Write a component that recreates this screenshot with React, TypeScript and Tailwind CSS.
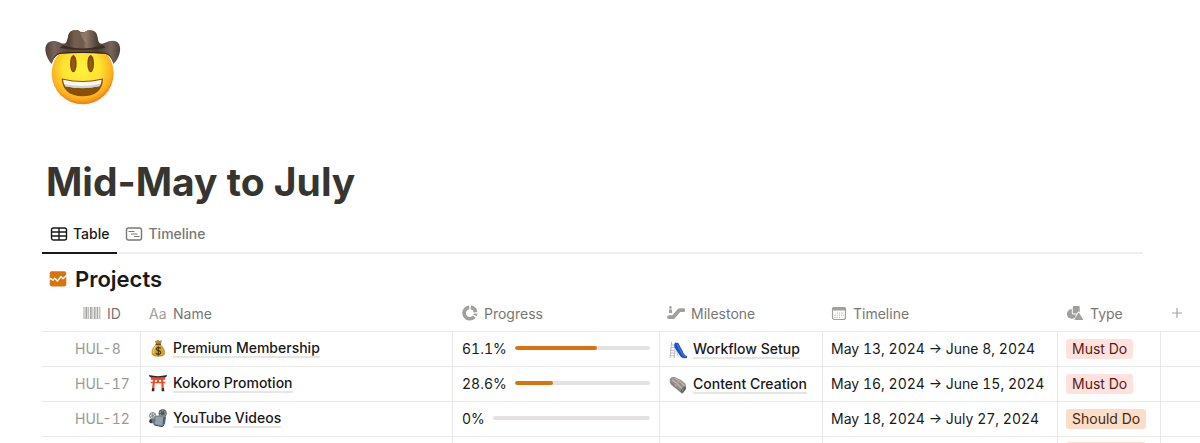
import type { ReactNode } from "react";

function CowboyFace() {
  return (
    <svg className="size-[76px]" viewBox="46 29 228 228" role="img" aria-label="Cowboy">
      <defs>
        <radialGradient id="face" cx="0.48" cy="0.42" r="0.62">
          <stop offset="0" stopColor="#fff23e" />
          <stop offset="0.5" stopColor="#ffe12e" />
          <stop offset="0.8" stopColor="#fcae1e" />
          <stop offset="1" stopColor="#e8620c" />
        </radialGradient>
        <linearGradient id="crown" x1="0" x2="1" y1="0" y2="0">
          <stop offset="0" stopColor="#493a32" />
          <stop offset="0.25" stopColor="#75604f" />
          <stop offset="0.5" stopColor="#6d5a4c" />
          <stop offset="0.6" stopColor="#8d7868" />
          <stop offset="1" stopColor="#44362e" />
        </linearGradient>
        <linearGradient id="brim" x1="0" x2="1" y1="0" y2="0">
          <stop offset="0" stopColor="#4f4038" />
          <stop offset="0.12" stopColor="#75655b" />
          <stop offset="0.3" stopColor="#54443b" />
          <stop offset="0.5" stopColor="#67564a" />
          <stop offset="0.7" stopColor="#4c3d34" />
          <stop offset="0.88" stopColor="#75655b" />
          <stop offset="1" stopColor="#4f4038" />
        </linearGradient>
      </defs>
      <circle cx="159" cy="162" r="93" fill="url(#face)" />
      <ellipse cx="131" cy="133" rx="10" ry="26" fill="#7f4506" />
      <ellipse cx="183" cy="133" rx="10" ry="26" fill="#7f4506" />
      <ellipse cx="131" cy="136" rx="6" ry="20" fill="#955a07" />
      <ellipse cx="183" cy="136" rx="6" ry="20" fill="#955a07" />
      <path d="M96 180Q95 176 100 178Q158 192 215 178Q221 176 220 181Q216 230 158 231Q101 230 96 180Z" fill="#8c4f08" />
      <path d="M100 181Q158 195 216 181Q215 192 210 200Q157 212 107 201Q101 191 100 181Z" fill="#f8f9f8" />
      <path d="M104 194Q158 206 213 193L210 201Q157 213 107 201Z" fill="#cad4d5" />
      <path d="M66 134C50 117 41 88 52 73C61 62 78 63 92 70C107 77 112 70 115 52C118 37 125 33 137 32C147 31 150 40 159 39C169 40 170 31 181 33C195 34 201 39 204 55C206 71 211 77 226 70C241 63 260 60 268 74C277 93 267 120 251 134C247 116 240 107 226 103Q159 98 92 103C78 107 71 116 66 134Z" fill="url(#brim)" />
      <path d="M111 73C116 61 113 44 123 37C134 30 145 31 150 36Q160 44 169 35C180 29 195 34 200 43C205 56 202 69 209 77C186 93 137 94 111 73Z" fill="url(#crown)" />
      <path d="M151 38Q158 47 169 36Q163 56 175 73Q156 62 151 38Z" fill="#a18b79" opacity=".6" />
      <path d="M100 78Q159 98 218 77L228 86Q159 99 90 86Z" fill="#3b2d26" />
      <path d="M66 134C70 111 79 103 92 100Q159 95 226 100C239 103 248 111 251 134C247 116 240 107 226 103Q159 99 92 103C78 107 71 116 66 134Z" fill="#33261f" />
    </svg>
  );
}

function MoneyBag() {
  return (
    <svg className="size-[18px] shrink-0" viewBox="0 0 54 54" aria-hidden="true">
      <path d="M17 4Q21 8 24 4Q28 1 31 5Q35 6 39 3Q38 12 33 17H22Q19 10 17 4Z" fill="#b98b24" />
      <path d="M21 17C12 24 6 38 10 47Q13 52 28 52Q43 52 46 47C50 38 43 23 34 17Z" fill="#d5a332" stroke="#94701f" strokeWidth="1.5" />
      <path d="M21 20Q12 31 13 43" fill="none" stroke="#f3d878" strokeWidth="3" />
      <path d="M20 16H36" stroke="#6c471b" strokeWidth="4" />
      <path d="M35 28Q32 25 28 26Q21 26 22 31Q23 34 29 35Q36 37 35 42Q33 46 28 46Q23 46 20 42M28 22V50" fill="none" stroke="#463910" strokeWidth="3.5" />
    </svg>
  );
}

function Torii() {
  return (
    <svg className="size-[18px] shrink-0" viewBox="0 0 54 54" aria-hidden="true">
      <path d="M5 8Q27 13 49 8L48 17Q27 19 6 17Z" fill="#ec4b2b" />
      <path d="M0 3Q27 10 54 3L52 9Q27 14 2 9Z" fill="#28292b" />
      <path d="M5 23H49V28H5ZM24 15H30V25H24ZM12 16H18L16 46H9ZM36 16H42L45 46H38Z" fill="#ed4a2a" />
      <path d="M9 43H16V52H8ZM38 43H45L46 52H38Z" fill="#292a2c" />
    </svg>
  );
}

function Projector() {
  return (
    <svg className="size-[18px] shrink-0" viewBox="0 0 54 54" aria-hidden="true">
      <circle cx="41" cy="13" r="12" fill="#53585b" />
      <circle cx="41" cy="13" r="8" fill="none" stroke="#9da3a5" strokeWidth="4" strokeDasharray="5 3.5" />
      <circle cx="11" cy="20" r="9.5" fill="#d8dddf" stroke="#727a7e" strokeWidth="2.5" />
      <path d="M11 11V29M3 15L19 25M3 25L19 15" stroke="#6f777b" strokeWidth="2" />
      <path d="M12 27L20 20L47 17L51 23L48 46L39 52L14 48Z" fill="#788992" />
      <path d="M20 25L42 24L40 49L18 45Z" fill="#91a3ac" />
      <path d="M43 25L50 23L47 44L41 49Z" fill="#526068" />
      <path d="M2 31L19 29L18 44L3 42Z" fill="#687780" />
      <ellipse cx="5" cy="37" rx="4" ry="6" fill="#303a40" />
      <path d="M16 48L39 53L45 49" fill="none" stroke="#3f494e" strokeWidth="3" />
    </svg>
  );
}

function Slide() {
  return (
    <svg className="size-[18px] shrink-0" viewBox="0 0 54 54" aria-hidden="true">
      <path d="M8 3L3 51M20 3L16 51M7 12H18M6 20H17M5 28H16M4 36H16M4 44H15" fill="none" stroke="#a9afb2" strokeWidth="2.5" />
      <path d="M22 26L27 46" stroke="#b4babd" strokeWidth="2.5" />
      <path d="M16 9Q18 3 28 6Q35 20 41 30Q45 43 54 45V51Q38 54 32 43Q24 30 16 18Z" fill="#1d4fc0" />
      <path d="M24 9Q29 22 37 33Q42 46 51 48" fill="none" stroke="#3d78e0" strokeWidth="4" />
    </svg>
  );
}

function Newspaper() {
  return (
    <svg className="size-[18px] shrink-0" viewBox="0 0 54 54" aria-hidden="true">
      <path d="M2 10Q6 1 17 3Q35 9 49 23Q54 31 49 42L42 52Q38 54 34 49L6 26Q0 18 2 10Z" fill="#92908d" />
      <path d="M9 11Q27 23 40 38M16 6Q34 15 47 30" fill="none" stroke="#b9b6b1" strokeWidth="4" />
      <path d="M6 20L36 47" stroke="#74716e" strokeWidth="2.5" />
      <path d="M17 29Q20 19 30 12L34 15Q24 22 22 33Z" fill="#c49f84" />
      <ellipse cx="43" cy="41" rx="5" ry="10" transform="rotate(35 43 41)" fill="#5c5a58" />
      <path d="M41 46Q39 41 45 37" fill="none" stroke="#c2c0bc" strokeWidth="2" />
    </svg>
  );
}

function TableIcon() {
  return (
    <svg className="h-4 w-[18px] shrink-0" viewBox="0 0 18 16" fill="none" stroke="currentColor" strokeWidth="1.4" aria-hidden="true">
      <rect x="1.5" y="2" width="15" height="12" rx="2" />
      <path d="M1.5 6H16.5M1.5 10H16.5M9 2V14" />
    </svg>
  );
}

function TimelineIcon() {
  return (
    <svg className="h-4 w-[18px] shrink-0" viewBox="0 0 18 16" fill="none" stroke="currentColor" strokeLinecap="round" aria-hidden="true">
      <rect x="1.5" y="2" width="15" height="12" rx="2" strokeWidth="1.4" />
      <path d="M4 5.5H9M6.5 8H12M9.5 10.5H14" strokeWidth="1.2" />
    </svg>
  );
}

function ChartIcon() {
  return (
    <svg className="size-[18px] shrink-0" viewBox="0 0 18 18" aria-hidden="true">
      <rect x="0.7" y="1.2" width="16.6" height="15.2" rx="2.2" fill="#d9730d" />
      <path d="M0 10.2L1.6 8.4L4 10.2L5.8 8.2L8.4 11L12 6.8L14 8.8L18 5" fill="none" stroke="#fff" strokeWidth="1.4" strokeLinejoin="round" />
    </svg>
  );
}

function BarcodeIcon() {
  return (
    <svg className="h-3 w-[18px] shrink-0" viewBox="0 0 18 12" fill="#a5a5a2" aria-hidden="true">
      <path d="M.5 0h1v12h-1zM2.4 0h2v12h-2zM5.3 0h.8v12h-.8zM7 0h1.7v12H7zM9.5 0h.8v12h-.8zM11.1 0h1.5v12h-1.5zM13.6 0h1.6v12h-1.6zM16.3 0h1v12h-1z" />
    </svg>
  );
}

function DonutIcon() {
  return (
    <svg className="size-4 shrink-0" viewBox="0 0 16 16" fill="none" stroke="#a0a09d" strokeWidth="3.6" aria-hidden="true">
      <path d="M7.2 2.4A5.7 5.7 0 1 0 12.3 11.6" />
      <path d="M8.8 2.4A5.7 5.7 0 0 1 13.6 7.2" />
      <path d="M13.6 8.7A5.7 5.7 0 0 1 13.1 10.6" />
    </svg>
  );
}

function EscalatorIcon() {
  return (
    <svg className="h-4 w-[18px] shrink-0" viewBox="0 0 18 16" fill="#a0a09d" aria-hidden="true">
      <circle cx="3.4" cy="2.4" r="1.3" />
      <path d="M2 5.3Q2 4.3 3 4.3H4Q5 4.3 5 5.3V8H2Z" />
      <path d="M2 12.2H6.2L12.5 5.1H16.3" fill="none" stroke="#a0a09d" strokeWidth="3.8" strokeLinecap="round" strokeLinejoin="round" />
    </svg>
  );
}

function CalendarIcon() {
  return (
    <svg className="h-4 w-4 shrink-0" viewBox="0 0 16 16" aria-hidden="true">
      <rect x="1.5" y="2.5" width="13" height="12" rx="2" fill="none" stroke="#a0a09d" strokeWidth="1.2" />
      <path d="M1 5.5V4Q1 2 3 2H13Q15 2 15 4V5.5Z" fill="#a0a09d" />
      <path d="M6 8H13M3.5 10.2H13M3.5 12.4H10" stroke="#a0a09d" strokeWidth="1" strokeDasharray="1 1.2" />
    </svg>
  );
}

function ShapesIcon() {
  return (
    <svg className="h-4 w-[18px] shrink-0" viewBox="0 0 18 16" fill="#a0a09d" aria-hidden="true">
      <path d="M5.8 4.1A4.8 4.8 0 1 0 9 12.4L10.2 9.6H7.2Q5.8 9.6 5.8 8Z" />
      <path d="M7.7 1H12.7Q13.7 1 13.7 2V7.5L12.8 6.6Q12.3 6.2 11.8 7L11 8.4H7.8Q6.8 8.4 6.8 7.4V2Q6.8 1 7.7 1Z" />
      <path d="M12.2 8Q12.7 7.3 13.2 8L17 14.2Q17.3 15 16.5 15H9Q8.2 15 8.6 14.2Z" />
    </svg>
  );
}

type Page = { title: string; icon: ReactNode };
type Project = {
  id: string;
  page: Page;
  progress: number;
  milestone?: Page;
  timeline: string;
  type: "Must Do" | "Should Do";
};

const projects: Project[] = [
  {
    id: "HUL-8",
    page: { title: "Premium Membership", icon: <MoneyBag /> },
    progress: 61.1,
    milestone: { title: "Workflow Setup", icon: <Slide /> },
    timeline: "May 13, 2024 → June 8, 2024",
    type: "Must Do",
  },
  {
    id: "HUL-17",
    page: { title: "Kokoro Promotion", icon: <Torii /> },
    progress: 28.6,
    milestone: { title: "Content Creation", icon: <Newspaper /> },
    timeline: "May 16, 2024 → June 15, 2024",
    type: "Must Do",
  },
  {
    id: "HUL-12",
    page: { title: "YouTube Videos", icon: <Projector /> },
    progress: 0,
    timeline: "May 18, 2024 → July 27, 2024",
    type: "Should Do",
  },
];

const tagColors = {
  "Must Do": "bg-[#ffe2dd] text-[#5d1715]",
  "Should Do": "bg-[#fadec9] text-[#49290e]",
};

function PageLink({ page, align = "items-center" }: { page: Page; align?: string }) {
  return (
    <a href="#" className={`flex gap-[6px] font-medium whitespace-nowrap ${align}`}>
      {page.icon}
      <span className="border-b-2 border-[#e6e6e4] leading-[17px]">{page.title}</span>
    </a>
  );
}

function ProgressBar({ value }: { value: number }) {
  return (
    <div className="flex items-center gap-2">
      <span>{value}%</span>
      <div className="h-1 flex-1 overflow-hidden rounded-full bg-[#e3e2e0]" role="progressbar" aria-label="Progress" aria-valuenow={value}>
        <div className="h-full rounded-full bg-[#d9730d]" style={{ width: `${value}%` }} />
      </div>
    </div>
  );
}

function Head({ icon, label, className = "px-2" }: { icon: ReactNode; label: string; className?: string }) {
  return (
    <th scope="col" className={`h-[37px] border-b border-[#e9e9e7] font-normal ${className}`}>
      <span className="flex items-center gap-[6px]">
        {icon}
        {label}
      </span>
    </th>
  );
}

const line = "h-[35px] border-r border-b border-[#e9e9e7]";
const cell = `${line} px-2 pb-[2px]`;

export default function App() {
  return (
    <main className="h-screen overflow-hidden bg-white pt-[29px] pl-[42px] font-[Inter,sans-serif] text-[14px] text-[#191918]">
      <div className="pl-[3px]">
        <CowboyFace />
      </div>
      <h1 className="mt-[53px] pl-1 text-[39px] leading-[48px] font-bold text-[#37352f]">Mid-May to July</h1>

      <nav className="mt-[10px] mr-[57px] flex border-b-2 border-[#efefee] font-medium" aria-label="Views">
        <a href="#" aria-current="page" className="-mb-[2px] flex h-[38px] items-center gap-[5px] border-b-2 border-[#191918] px-2 pb-px">
          <TableIcon />
          Table
        </a>
        <a href="#" className="flex h-9 items-center gap-[5px] px-2 pb-px text-[#787774]">
          <TimelineIcon />
          Timeline
        </a>
      </nav>

      <h2 className="mt-[9px] flex items-center gap-2 pl-[7px] text-[22px] leading-8 font-semibold">
        <ChartIcon />
        Projects
      </h2>

      <table className="w-full table-fixed border-separate border-spacing-0 text-left tabular-nums">
        <colgroup>
          <col className="w-[99px]" />
          <col className="w-[312px]" />
          <col className="w-[207px]" />
          <col className="w-[163px]" />
          <col className="w-[235px]" />
          <col className="w-[103px]" />
          <col />
        </colgroup>
        <thead className="text-[#787774]">
          <tr>
            <Head icon={<BarcodeIcon />} label="ID" className="pl-[41px]" />
            <Head icon={<span className="w-[18px] text-[#a0a09d]" aria-hidden="true">Aa</span>} label="Name" />
            <Head icon={<DonutIcon />} label="Progress" className="px-[9px]" />
            <Head icon={<EscalatorIcon />} label="Milestone" className="px-[7px]" />
            <Head icon={<CalendarIcon />} label="Timeline" />
            <Head icon={<ShapesIcon />} label="Type" />
            <th scope="col" className="h-[37px] border-b border-[#e9e9e7] pl-[10px]">
              <button type="button" aria-label="Add property" className="flex">
                <svg className="size-3" viewBox="0 0 12 12" stroke="#a5a5a2" strokeWidth="1.2" aria-hidden="true">
                  <path d="M1 6H11M6 1V11" />
                </svg>
              </button>
            </th>
          </tr>
        </thead>
        <tbody>
          {projects.map((p) => (
            <tr key={p.id}>
              <td className={`${line} pb-[2px] pl-[33px] text-[#9b9a97]`}>{p.id}</td>
              <td className={cell}>
                <PageLink page={p.page} />
              </td>
              <td className={`${line} px-[9px] pb-[2px]`}>
                <ProgressBar value={p.progress} />
              </td>
              <td className={`${line} px-[9px] pt-px`}>{p.milestone && <PageLink page={p.milestone} align="items-end" />}</td>
              <td className={`${cell} whitespace-nowrap`}>{p.timeline}</td>
              <td className={cell}>
                <span className={`inline-block rounded-[3px] px-[6px] leading-[20px] whitespace-nowrap ${tagColors[p.type]}`}>{p.type}</span>
              </td>
              <td className="border-b border-[#e9e9e7]" />
            </tr>
          ))}
          <tr>
            {["id", "name", "progress", "milestone", "timeline"].map((key) => (
              <td key={key} className={cell} />
            ))}
            <td className={cell}>
              <div className="h-[22px] w-20 rounded-[3px] bg-[#fadec9]" />
            </td>
            <td />
          </tr>
        </tbody>
      </table>
    </main>
  );
}
